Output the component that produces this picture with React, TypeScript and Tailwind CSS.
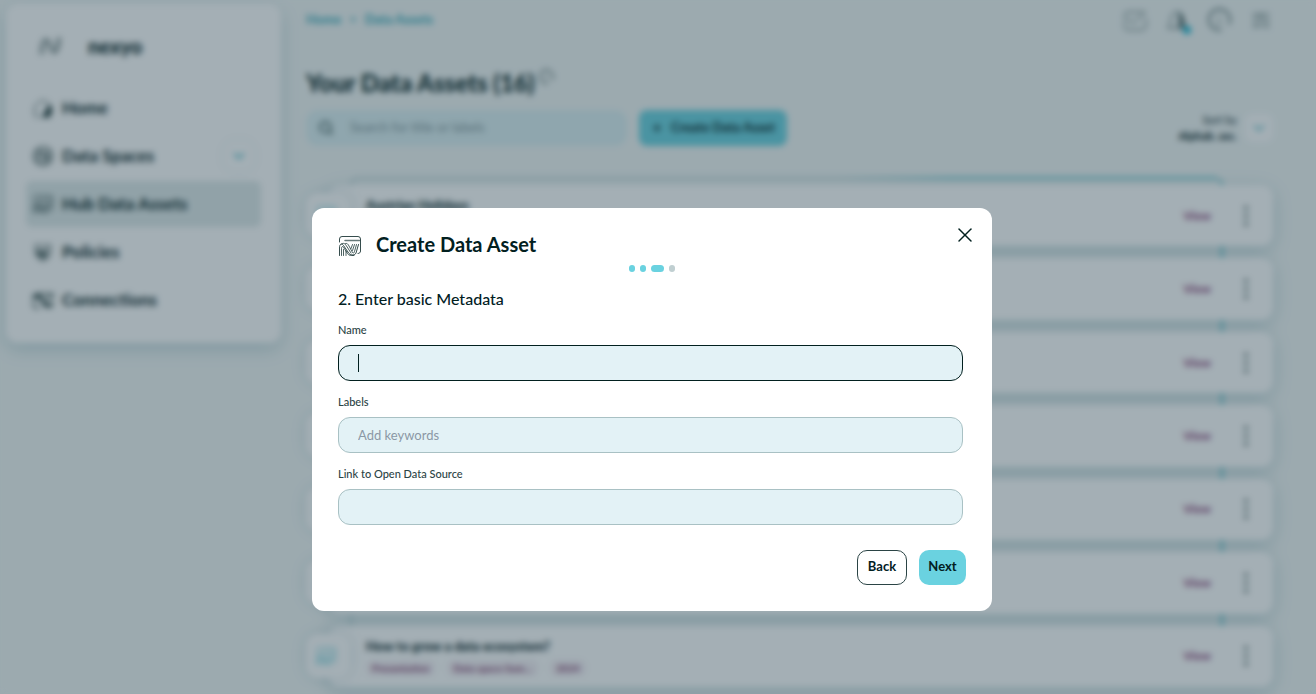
import type { ReactNode } from 'react'
import { ChevronDown, Plus, Search, X } from 'lucide-react'

interface IconProps {
  className?: string
}

interface Asset {
  id: number
  title?: string
  tags?: string[]
}

const assets: Asset[] = [
  { id: 1, title: 'Austrian Holidays' },
  { id: 2 },
  { id: 3 },
  { id: 4 },
  { id: 5 },
  { id: 6 },
  { id: 7, title: 'How to grow a data ecosystem?', tags: ['Presentation', 'Data space Sum…', '2024'] },
]

function Icon({ className, children }: IconProps & { children: ReactNode }) {
  return (
    <svg
      viewBox="0 0 24 24"
      className={className}
      fill="none"
      stroke="currentColor"
      strokeWidth="1.5"
      strokeLinecap="round"
      strokeLinejoin="round"
      aria-hidden="true"
    >
      {children}
    </svg>
  )
}

function LogoIcon({ className }: IconProps) {
  return (
    <Icon className={className}>
      <path
        d="M2 20C3 12 4 5 7 5s5 14 9 14 5-7 6-15M5 20C6 12 6 7 8 7M9 5c4 0 5 13 8 13 2 0 2-7 3-14"
        strokeWidth="1"
      />
    </Icon>
  )
}

function HomeIcon({ className }: IconProps) {
  return (
    <Icon className={className}>
      <path
        d="M8 22H6a3 3 0 0 1-3-3v-7c0-3 5-8 9-8s9 5 9 8v7a3 3 0 0 1-3 3h-5"
        strokeWidth="1"
      />
      <path d="M14 21c3-2 4-6 4-11M16 21c3-2 4-5 4-10M12 21c3-2 4-4 4-7" strokeWidth="2" />
    </Icon>
  )
}

function SpacesIcon({ className }: IconProps) {
  return (
    <Icon className={className}>
      <circle cx="12" cy="12" r="10" />
      <path d="M7 17V9c0-2 3-2 4 0l3 6c1 2 3 1 3-1V7" strokeWidth="1.500" />
      <path d="M9 17c3 3 8 1 9-3M6 10c2-4 6-5 8-1l2 4" strokeWidth="1" />
    </Icon>
  )
}

function AssetIcon({ className }: IconProps) {
  return (
    <svg
      viewBox="0 0 24 22"
      className={className}
      fill="none"
      stroke="currentColor"
      strokeWidth=".8"
      strokeLinecap="round"
      strokeLinejoin="round"
      aria-hidden="true"
    >
      <path d="M1.500 7V4A2.500 2.500 0 0 1 4 1.500H20A2.500 2.500 0 0 1 22.500 4V16C22.500 17.500 21.500 18.500 20 18.500" />
      <path d="M7 5.500H21.500" strokeWidth="1.500" strokeOpacity=".6" />
      <path d="M1.500 20.500V13C1.500 8.500 4 8 5.500 10.500L11 18.500C13 20.500 17 20.500 18 18L20.500 9.500" />
      <path d="M3.500 20.500V13.500C3.500 11 5 11 6 13L9.500 18.500C11 20.500 12 20.500 13.500 20.500H16" strokeWidth=".7" />
      <path d="M5.500 20.500V14.500M3.500 9C5.500 7.500 7 8.500 8.500 11L13 18" strokeWidth=".7" />
      <path d="M7.500 8.500C9 8 10 9 11 11L14.500 17.500C15.500 18.500 16 18 16.500 16.500L18.500 9.500" strokeWidth=".7" />
      <path d="M13 13.500L14.500 9.500M14.500 15.500L16.500 9.500M8 16V20.500" strokeWidth=".7" />
    </svg>
  )
}

function PolicyIcon({ className }: IconProps) {
  return (
    <Icon className={className}>
      <path d="M4 4c5 1 11 1 16 0v9c0 4-4 7-8 9-4-2-8-5-8-9Z" strokeWidth="1" />
      <path d="M8 9v6c0 2 2 3 4 3s4-1 4-3V8M11 10v7M13 10v7M6 11v4" />
    </Icon>
  )
}

function ConnectionIcon({ className }: IconProps) {
  return (
    <Icon className={className}>
      <path
        d="M1 9c1-4 4-4 7-4h14c2 0 1 4-1 4h-5M1 11h7M1 15c0 4 2 6 6 6M7 6c4 2 4 6 8 8M9 10c3 2 3 5 7 6M11 15c2 4 6 6 10 4 2-1 1-4 0-5"
      />
      <path d="M3 8h6M14 17h6" strokeWidth="2" />
    </Icon>
  )
}

function BellIcon({ className }: IconProps) {
  return (
    <Icon className={className}>
      <path d="M3 20c3-3 2-9 4-13s8-5 10 0 1 9 4 13Z" strokeWidth="1" />
      <path d="M13 19c2-3 2-8 1-13M16 19c1-3 1-8 0-12M18 19c1-2 0-6-1-9" strokeWidth="1.500" />
    </Icon>
  )
}

function MailIcon({ className }: IconProps) {
  return (
    <Icon className={className}>
      <path
        d="M22 4H5C2 4 1 6 1 9M1 16c0 4 1 6 4 6h14c3 0 4-2 4-6v-5M1 13l4-2 5 4L21 6"
        strokeWidth="1"
      />
    </Icon>
  )
}

function InfoIcon({ className }: IconProps) {
  return (
    <Icon className={className}>
      <path d="M14 22A10.500 10.500 0 1 1 22 16" />
      <path d="M12 11v6M12 7v1" strokeWidth="1" />
    </Icon>
  )
}

function MenuIcon({ className }: IconProps) {
  return (
    <Icon className={className}>
      <path
        d="M4 6h16M4 10h5c4 0 5 5 9 5h2M4 15h4c4 0 5 4 9 4h3M4 19h6M11 8c4 0 4 4 9 3"
        strokeWidth="1"
      />
    </Icon>
  )
}

const navItems = [
  { label: 'Home', icon: HomeIcon },
  { label: 'Data Spaces', icon: SpacesIcon, expandable: true },
  { label: 'Hub Data Assets', icon: AssetIcon, active: true },
  { label: 'Policies', icon: PolicyIcon },
  { label: 'Connections', icon: ConnectionIcon },
]

function Sidebar() {
  return (
    <aside className="mt-1 ml-1.5 w-[275px] shrink-0 self-start rounded-xl bg-white px-5 pt-[26px] pb-5 shadow-[0_6px_18px_rgba(0,90,110,0.2)]">
      <div className="flex h-8 items-center gap-[26px] pl-3">
        <LogoIcon className="size-6" />
        <span className="text-xl font-black">nexyo</span>
      </div>
      <nav className="mt-[23px] flex flex-col gap-0.5">
        {navItems.map(({ label, icon: NavIcon, expandable, active }) => (
          <div
            key={label}
            className={`flex h-[46px] items-center rounded-md px-1.5 ${active ? 'bg-[#e0eaea]' : ''}`}
          >
            <a href="#" className="flex flex-1 items-center gap-2 text-[17px] font-bold">
              <NavIcon className="size-[22px]" />
              {label}
            </a>
            {expandable && (
              <button
                type="button"
                aria-label={`Expand ${label}`}
                className="flex size-8 items-center justify-center rounded-xl text-[#0fa3b5] shadow-[0_0_4px_rgba(0,90,110,0.15)]"
              >
                <ChevronDown className="size-[18px]" />
              </button>
            )}
          </div>
        ))}
      </nav>
    </aside>
  )
}

function AssetRow({ id, title, tags }: Asset) {
  return (
    <li className="relative ml-[22px] flex items-center rounded-xl bg-white pr-5 pl-[38px] shadow-[0_4px_18px_rgba(0,90,110,0.22)]">
      <div className="absolute top-2 -left-[22px] flex size-11 items-center justify-center rounded-xl bg-white pr-1 text-[#4fc4d2] shadow-[0_0_14px_rgba(0,90,110,0.16)]">
        <AssetIcon className="h-5 w-[22px]" />
      </div>
      <div className="flex-1 self-stretch pt-2.5">
        {title && <h2 className="text-[13px] leading-5 font-black">{title}</h2>}
        {tags && (
          <div className="mt-1 flex gap-3 text-[10px] leading-4 font-black text-[#8a4a76]">
            {tags.map((tag) => (
              <span key={tag} className="rounded-md bg-[#f6f0f5] px-1.5">
                {tag}
              </span>
            ))}
          </div>
        )}
      </div>
      <a href="#" className="mr-7 text-xs font-black text-[#8a3f78]">
        View
      </a>
      <button type="button" aria-label={`Options for asset ${id}`} className="flex w-3.5 flex-col items-center gap-1">
        <span className="size-1 rounded-full bg-[#47605f]" />
        <span className="size-1 rounded-full bg-[#47605f]" />
        <span className="size-1 rounded-full bg-[#47605f]" />
      </button>
    </li>
  )
}

function AssetsPage() {
  return (
    <main className="flex-1 pr-[43px] pl-[25px]">
      <header className="flex h-10 items-center justify-between">
        <nav aria-label="Breadcrumb" className="flex gap-2 text-[13px] font-bold text-[#35aaba]">
          <a href="#">Home</a>
          <span>&gt;</span>
          <a href="#">Data Assets</a>
        </nav>
        <div className="flex items-center gap-[18px] text-[#2e4a4b]">
          <button type="button" aria-label="Messages">
            <MailIcon className="size-6" />
          </button>
          <button type="button" aria-label="Notifications" className="relative">
            <BellIcon className="size-6" />
            <span className="absolute -right-0.5 -bottom-0.5 size-2 rounded-full bg-[#12b5d3]" />
          </button>
          <button type="button" aria-label="Information">
            <InfoIcon className="size-6" />
          </button>
          <button type="button" aria-label="Menu">
            <MenuIcon className="size-6" />
          </button>
        </div>
      </header>

      <div className="mt-[25px] flex h-9 items-center gap-1">
        <h1 className="text-2xl font-black">Your Data Assets (16)</h1>
        <InfoIcon className="mb-3 size-4" />
      </div>

      <div className="mt-[9px] flex h-9 items-center gap-3">
        <div className="flex h-9 w-[321px] items-center gap-4 rounded-xl bg-[#dcf0f3] px-3">
          <Search className="size-4" />
          <input
            type="search"
            aria-label="Search assets"
            placeholder="Search for title or labels"
            className="flex-1 text-[13px] outline-none placeholder:text-[#7d9298]"
          />
        </div>
        <button
          type="button"
          className="flex h-9 w-[148px] items-center justify-center gap-2 rounded-lg bg-[#6ad2e0] text-[13px] font-bold whitespace-nowrap"
        >
          <Plus className="size-3" strokeWidth={3} />
          Create Data Asset
        </button>
        <div className="ml-auto text-right text-[11px] leading-4">
          <p>Sort by</p>
          <p className="font-black">Alphab. asc.</p>
        </div>
        <button
          type="button"
          aria-label="Change sorting"
          className="-ml-1 flex size-7 items-center justify-center rounded-lg bg-white text-[#35aaba]"
        >
          <ChevronDown className="size-[18px]" />
        </button>
      </div>

      <div className="relative mt-[31px] pt-2">
        <div className="absolute inset-y-0 right-[50px] left-11 rounded-t-lg border-2 border-[#c3d8da] border-r-[#4dbfca]" />
        <div className="absolute top-0 right-[56px] left-[55%] h-0.5 bg-linear-to-r from-[#c3d8da] to-[#4dbfca] to-30%" />
        <ul className="relative grid h-[502px] grid-rows-7 gap-3">
          {assets.map((asset) => (
            <AssetRow key={asset.id} {...asset} />
          ))}
        </ul>
      </div>
    </main>
  )
}

const steps = ['w-[6px] bg-[#6ad2e0]', 'w-[6px] bg-[#6ad2e0]', 'w-[13px] bg-[#6ad2e0]', 'w-[6px] bg-[#c0cfd1]']

interface FieldProps {
  id: string
  label: string
  placeholder?: string
  focused?: boolean
}

function Field({ id, label, placeholder, focused }: FieldProps) {
  return (
    <div className="flex flex-col gap-1.5">
      <label htmlFor={id} className="text-[11px] leading-[18px] font-medium text-[#2b4445]">
        {label}
      </label>
      <div className="relative">
        <input
          id={id}
          type="text"
          placeholder={placeholder}
          className={`block h-9 w-full rounded-xl border bg-[#e3f2f6] px-[19px] text-[13px] outline-none placeholder:text-[#8b98a5] ${
            focused ? 'border-[#02201f]' : 'border-[#a9c1c4]'
          }`}
        />
        {focused && <span className="absolute top-[9px] left-5 h-[18px] w-px bg-[#02201f]" />}
      </div>
    </div>
  )
}

function CreateAssetDialog() {
  return (
    <div
      role="dialog"
      aria-labelledby="dialog-title"
      className="relative w-[680px] self-start rounded-xl bg-white px-[26px] pt-[22px] pb-[26px]"
    >
      <div className="flex h-7 items-center gap-3.5">
        <AssetIcon className="mt-1 h-[22px] w-6" />
        <h2 id="dialog-title" className="text-xl font-bold">
          Create Data Asset
        </h2>
      </div>
      <button type="button" aria-label="Close" className="absolute top-[15px] right-[15px]">
        <X className="size-6" strokeWidth={1.5} />
      </button>
      <div className="mt-[7px] flex justify-center gap-[5px]">
        {steps.map((step, i) => (
          <span key={i} className={`h-[7px] rounded-full ${step}`} />
        ))}
      </div>

      <form className="mt-[15px]">
        <h3 className="text-base leading-6 font-medium">2. Enter basic Metadata</h3>
        <div className="mt-2.5 mr-[3px] flex flex-col gap-3">
          <Field id="name" label="Name" focused />
          <Field id="labels" label="Labels" placeholder="Add keywords" />
          <Field id="source" label="Link to Open Data Source" />
        </div>
        <div className="mt-[25px] flex justify-end gap-3 text-[13px] font-bold">
          <button type="button" className="h-[35px] w-[50px] rounded-[10px] border border-[#2b4445] pb-0.5">
            Back
          </button>
          <button type="submit" className="h-[35px] w-[47px] rounded-[10px] bg-[#6ad2e0] pb-0.5">
            Next
          </button>
        </div>
      </form>
    </div>
  )
}

export default function App() {
  return (
    <div className="relative h-screen overflow-hidden bg-[#f2f7f6] font-['Lato',sans-serif] text-[#02201f]">
      <div className="flex">
        <Sidebar />
        <AssetsPage />
      </div>
      <div className="absolute inset-0 flex justify-center bg-[#1b3746]/40 pt-[208px] pr-3 backdrop-blur-[3px]">
        <CreateAssetDialog />
      </div>
    </div>
  )
}
